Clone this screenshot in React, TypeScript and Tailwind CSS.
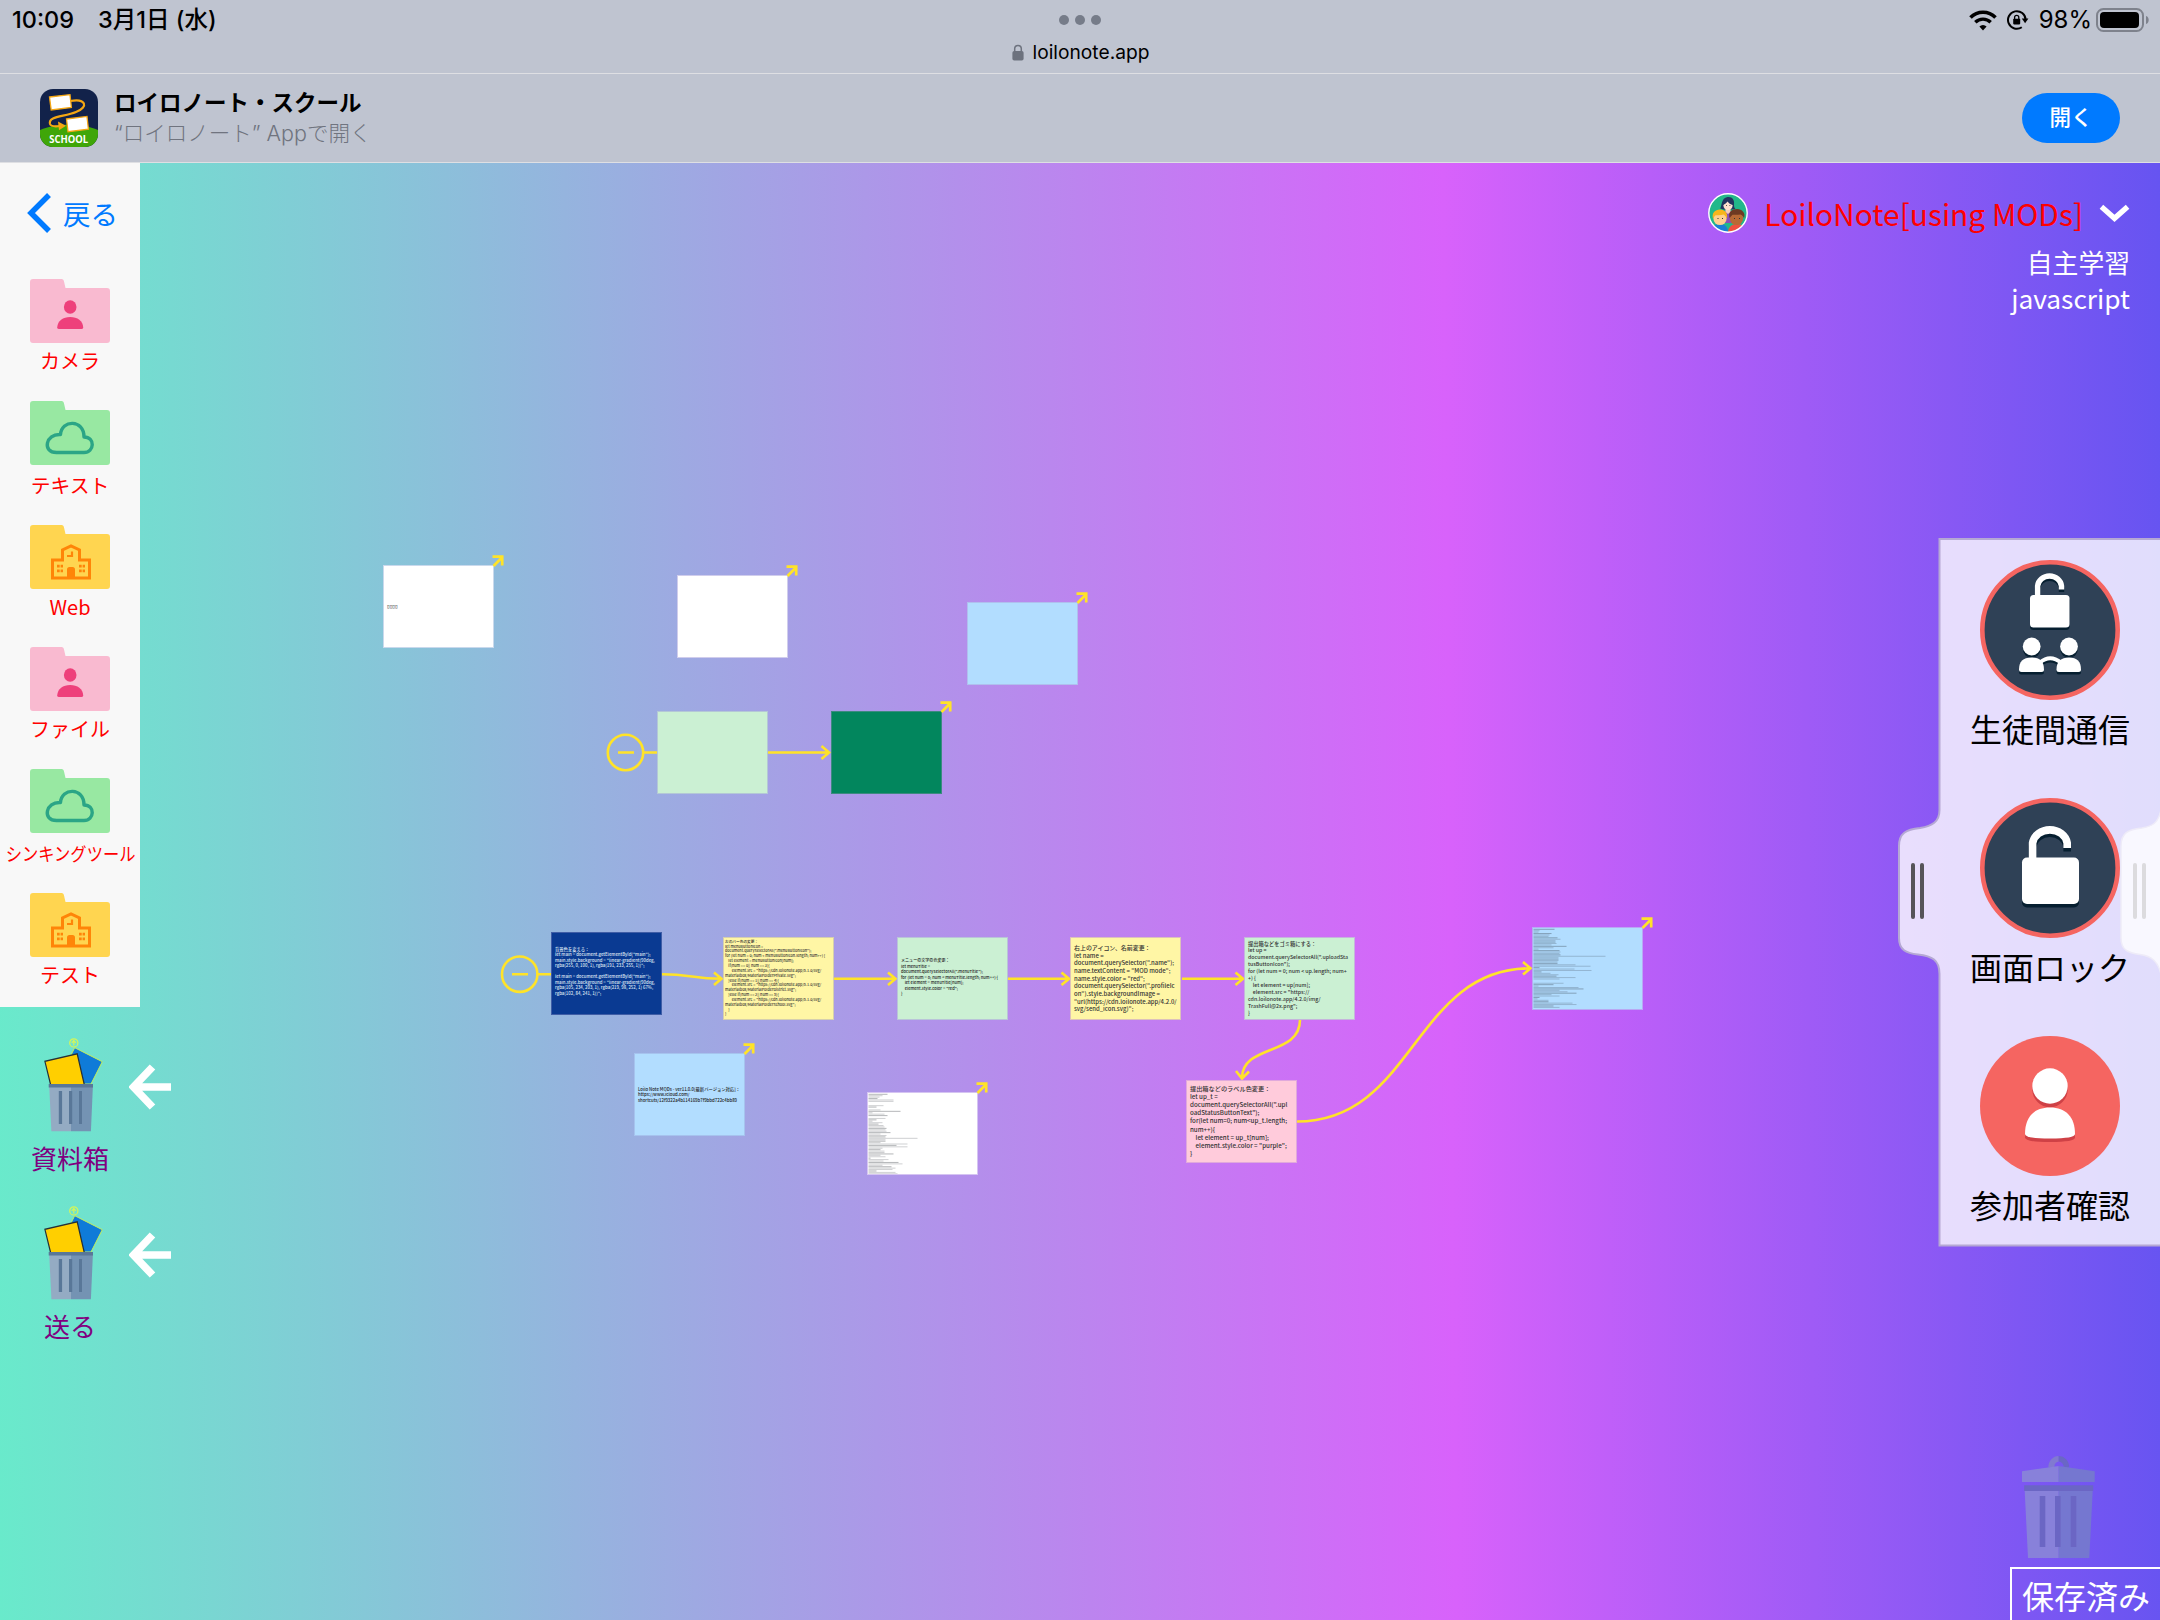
import React from "react";

const JP = "font-['Noto_Sans_CJK_JP',sans-serif]";
const UI = "font-['Inter','Noto_Sans_CJK_JP',sans-serif]";

function StatusBar() {
  return (
    <div className={`flex h-[74px] shrink-0 flex-col border-b border-[#dedfe3] ${UI}`}>
      <div className="grid h-[40px] grid-cols-3 items-center pl-[12px] pr-[10px]">
        <div className="flex items-center text-[23.5px] font-medium leading-[40px] text-black">
          <span className="w-[86px]">10:09</span>
          <span className="whitespace-nowrap text-[23.5px]">3月1日 (水)</span>
        </div>
        <div className="flex items-center justify-center gap-[6px] pr-[2px]">
          <i className="size-[10px] rounded-full bg-[#767c89]" />
          <i className="size-[10px] rounded-full bg-[#767c89]" />
          <i className="size-[10px] rounded-full bg-[#767c89]" />
        </div>
        <div className="flex items-center justify-end">
          <svg width="28" height="21" viewBox="0 0 28 21" fill="none" stroke="#000" className="mr-[10px]">
            <path d="M1.5 7.4a17.6 17.6 0 0 1 25 0" strokeWidth="3.6" />
            <path d="M6.3 12.3a11 11 0 0 1 15.4 0" strokeWidth="3.4" />
            <path d="M14 20.4l-3.6-3.8a5 5 0 0 1 7.2 0z" fill="#000" stroke="none" />
          </svg>
          <svg width="22" height="20" viewBox="0 0 22 20" className="mr-[10px]">
            <path d="M14.8 17.2a8.8 8.8 0 1 1 3.8-7.4" fill="none" stroke="#000" strokeWidth="2" />
            <path d="M14.8 8.6h6.6l-3.3 4.6z" />
            <rect x="6.2" y="8.8" width="7" height="5.6" rx="0.8" />
            <path d="M7.6 9V7.4a2.1 2.1 0 0 1 4.2 0V9" fill="none" stroke="#000" strokeWidth="1.3" />
          </svg>
          <span className="mr-[4px] text-[24px] leading-[40px] text-black">98%</span>
          <svg width="54" height="24" viewBox="0 0 54 24">
            <rect x="1" y="1" width="46" height="22" rx="6.5" fill="none" stroke="#7e828c" strokeWidth="2" />
            <rect x="4" y="4" width="39" height="16" rx="4" />
            <path d="M50 8c3.600 1 3.600 7 0 8z" fill="#7e828c" />
          </svg>
        </div>
      </div>
      <div className="flex h-[24px] items-center justify-center pl-[1px] text-[19.2px] leading-[24px] text-black">
        <svg width="12" height="17" viewBox="0 0 12 17" className="mr-[9px]">
          <rect x="0.400" y="7" width="11.200" height="9.500" rx="1.800" fill="#6d727e" />
          <path d="M2.700 8V4.800a3.300 3.300 0 0 1 6.600 0V8" fill="none" stroke="#6d727e" strokeWidth="1.500" />
        </svg>
        <span>loilonote.app</span>
      </div>
    </div>
  );
}

function AppIcon() {
  return (
    <svg width="58" height="58" viewBox="0 0 58 58">
      <defs>
        <clipPath id="app-icon-shape">
          <rect width="58" height="58" rx="13" />
        </clipPath>
      </defs>
      <g clipPath="url(#app-icon-shape)">
        <rect width="58" height="58" fill="#12224a" />
        <path d="M0 41C16 34 42 34 58 41V58H0z" fill="#3fa608" />
        <path
          d="M30 12C46 9 49 18 36 23C24 28 8 27 10 35C11 38 16 37.500 20 37"
          fill="none"
          stroke="#f5a713"
          strokeWidth="2.200"
        />
        <path d="M18 32.500l8 4.200-7 4.600z" fill="#f5a713" />
        <path d="M9.500 8l20.500-2.400 1.400 12.800L11.200 21z" fill="#fff" stroke="#f5a713" strokeWidth="1.300" />
        <path d="M26.500 30l20.500-2.600 1.400 12.800L28 42.700z" fill="#fff" stroke="#f5a713" strokeWidth="1.300" />
        <text
          x="28.700"
          y="54.300"
          textAnchor="middle"
          fill="#fff"
          fontFamily="Open Sans"
          fontWeight="700"
          fontSize="10.500"
          textLength="39"
          lengthAdjust="spacingAndGlyphs"
        >
          SCHOOL
        </text>
      </g>
    </svg>
  );
}

function AppBanner() {
  return (
    <div className={`flex h-[89px] shrink-0 items-center border-b border-[#dedfe3] pl-[40px] pr-[40px] ${UI}`}>
      <AppIcon />
      <div className="ml-[16px] flex flex-1 flex-col">
        <span className="whitespace-nowrap text-[22.5px] font-bold leading-[30px] text-black">ロイロノート・スクール</span>
        <span className="whitespace-nowrap text-[21.500px] font-light leading-[30px] text-[#70747f]">“ロイロノート” Appで開く</span>
      </div>
      <button className="h-[50px] w-[98px] rounded-[25px] bg-[#007aff] pb-[2px] text-[21.500px] font-medium text-white">開く</button>
    </div>
  );
}

type Kind = "person" | "cloud" | "school";

function FolderIcon({ kind }: { kind: Kind }) {
  const fill = kind === "person" ? "#f9bad0" : kind === "cloud" ? "#98e8a2" : "#ffd550";
  return (
    <svg width="80" height="64" viewBox="0 0 80 64" className="shrink-0">
      <path
        d="M3 0H31.500C33 0 33.800 1 34 2.500L35.500 9H77A3 3 0 0 1 80 12V61A3 3 0 0 1 77 64H3A3 3 0 0 1 0 61V3A3 3 0 0 1 3 0z"
        fill={fill}
      />
      {kind === "person" && (
        <g fill="#ee407b">
          <ellipse cx="40.200" cy="28" rx="6.300" ry="6.800" />
          <path d="M27.200 48.500C27.500 42 33 38 40.200 38S53 42 53.200 48.500Q53 50 51.500 50H29Q27.300 50 27.200 48.500z" />
        </g>
      )}
      {kind === "cloud" && (
        <path
          d="M26.500 51.500C12 51.500 15.500 32.500 30.500 33.500C31.500 18.500 54 18 54 36C65.500 36 64.500 51.500 54 51.500z"
          fill="none"
          stroke="#2ba586"
          strokeWidth="3.400"
          strokeLinejoin="round"
        />
      )}
      {kind === "school" && (
        <g fill="none" stroke="#ff8508" strokeWidth="3">
          <path d="M22.500 35V53H59.500V35H49.500V25L41 21L32.500 25V35z" strokeLinejoin="miter" />
          <path d="M37 54V44.500Q37 42 39.500 42H42.500Q45 42 45 44.500V54z" fill="#ff8508" stroke="none" />
          <path d="M42 26.500V31H37" strokeWidth="2.200" />
          <path d="M27 41.200h6M27 45.900h6M49 41.200h6M49 45.900h6" strokeWidth="2.800" strokeDasharray="2.700 0.900" />
        </g>
      )}
    </svg>
  );
}

const menu: { label: string; kind: Kind; box: string; text: string }[] = [
  { label: "カメラ", kind: "person", box: "h-[122px]", text: "mt-[3px] text-[20px]" },
  { label: "テキスト", kind: "cloud", box: "h-[124px]", text: "mt-[5px] text-[19.800px]" },
  { label: "Web", kind: "school", box: "h-[122px]", text: "mt-[3px] text-[20px]" },
  { label: "ファイル", kind: "person", box: "h-[122px]", text: "mt-[3px] text-[20px]" },
  { label: "シンキングツール", kind: "cloud", box: "h-[124px]", text: "mt-[5px] pl-[2px] text-[18.500px] scale-x-[0.88]" },
  { label: "テスト", kind: "school", box: "h-[110px]", text: "mt-[3px] text-[20px]" },
];

function FullBin() {
  return (
    <svg width="62" height="94" viewBox="0 0 62 94">
      <path d="M30.700 9.700L58.300 23.700 47 46H22L27 17z" fill="#0f7bd8" stroke="#c5ef5a" strokeWidth="1" />
      <circle cx="29.800" cy="4.900" r="4.100" fill="none" stroke="#d3f65a" strokeWidth="1.200" />
      <path d="M29.800 7.500V3M27.700 4.800l2.100-2.300 2.100 2.300" fill="none" stroke="#d3f65a" strokeWidth="1.200" />
      <path d="M6.700 47L0.900 23.300 33.200 15.800 40.400 47z" fill="#ffcf00" stroke="#243038" strokeWidth="1.200" />
      <path d="M5.200 48H27V93.300H7.400z" fill="#94abc3" />
      <path d="M27 48H48.900L46.900 93.300H27z" fill="#7493b3" />
      <path d="M4.700 46H49V49.400H4.700z" fill="#597798" />
      <path d="M14.800 53h3.300v33h-3.300zM25 53h3.200v33H25zM35 53h3v33h-3z" fill="#597798" />
    </svg>
  );
}

function BinButton({ label }: { label: string }) {
  return (
    <div className="flex h-[168px] w-[180px]">
      <div className="flex w-[140px] flex-col items-center">
        <div className="pl-[9px]">
          <FullBin />
        </div>
        <span className="mt-[8px] text-[26px] leading-[36px] text-[#800080]">{label}</span>
      </div>
      <svg width="44" height="46" viewBox="0 0 44 46" className="-ml-[11px] mt-[26px]" fill="none" stroke="#fff" strokeWidth="7.600">
        <path d="M23.500 3L4.500 23 23.500 43M5 23H42" />
      </svg>
    </div>
  );
}

function Sidebar() {
  return (
    <div className={`flex w-[180px] flex-col ${JP}`}>
      <div className="flex h-[844px] w-[140px] flex-col items-center bg-[#f8f8f8]">
        <div className="flex h-[100px] w-full shrink-0 items-center pl-[27px] text-[#007aff]">
          <svg width="25" height="40" viewBox="0 0 25 40" fill="none" stroke="#007aff" strokeWidth="5.500">
            <path d="M22 2L4 20 22 38" />
          </svg>
          <span className="ml-[11px] text-[27.500px] leading-[42px]">戻る</span>
        </div>
        <div className="flex flex-col items-center pt-[16px]">
          {menu.map((m) => (
            <div key={m.label} className={`flex w-[140px] flex-col items-center ${m.box}`}>
              <FolderIcon kind={m.kind} />
              <span className={`whitespace-nowrap leading-[30px] text-[#ff0000] ${m.text}`}>{m.label}</span>
            </div>
          ))}
        </div>
      </div>
      <div className="flex flex-col pt-[31px]">
        <BinButton label="資料箱" />
        <BinButton label="送る" />
      </div>
    </div>
  );
}

function Avatar() {
  return (
    <svg width="40" height="40" viewBox="0 0 40 40">
      <defs>
        <clipPath id="avatar-shape">
          <circle cx="20" cy="20" r="19" />
        </clipPath>
      </defs>
      <g clipPath="url(#avatar-shape)">
        <rect width="40" height="40" fill="#22b88a" />
        <path d="M12 30C11 20 15 17.500 20 17.500S29 20 28 30z" fill="#8a4fb8" />
        <path d="M12.200 15.500C14 13 13 5 19.500 4C26 3.500 26.500 9 26 12c0 2 .5 3 1.500 4l-4 .5h-8z" fill="#22355f" />
        <path d="M17.500 15h5v4l-2.500 2-2.500-2z" fill="#f6cfb9" />
        <circle cx="20" cy="12.500" r="4.600" fill="#ffe0cf" />
        <path d="M15 12c2-1 3.500-2 4.500-3.500 1 1.500 3 3 5.500 3.500C26 7 23 5 20 5s-6 2-5 7z" fill="#22355f" />
        <path d="M3 40C3 33 7 31 12 31s8 3 8 9z" fill="#1a7fd4" />
        <circle cx="12" cy="25.500" r="6.600" fill="#ffd08f" />
        <path d="M5 26C3.500 20 7 16.500 12 16.500s8 3.500 7 9c-1-2-2-3-3.500-4-3 1-7 .5-8.500 1z" fill="#f8b61c" />
        <path d="M20 40c0-6 4-9 9-9s8 3 8 9z" fill="#ee5140" />
        <circle cx="28.500" cy="25.500" r="6.600" fill="#b86a35" />
        <path d="M21.500 25C20 19 24 16 29 16s9 4 7 9c-1-2-2-3-3.500-3.500-3 .5-6 .3-8 .3z" fill="#6e3a22" />
        <path d="M9.500 25.500h1M14 25.500h1M26 25.500h1M31 25.500h1M18 12.500h.8M21.500 12.500h.8" stroke="#333" strokeWidth="1" />
      </g>
      <circle cx="20" cy="20" r="19.200" fill="none" stroke="#fff" strokeWidth="1.400" />
    </svg>
  );
}

function Account() {
  return (
    <div className={`flex flex-col items-end pr-[30px] pt-[28px] ${JP}`}>
      <div className="flex h-[44px] items-center">
        <Avatar />
        <span className="ml-[16px] mr-[16px] whitespace-nowrap text-[29.900px] leading-[44px] text-[#ff0000]">LoiloNote[using MODs]</span>
        <svg width="31" height="20" viewBox="0 0 32 20" fill="none" stroke="#fff" strokeWidth="5.500">
          <path d="M2.500 3.500L16 15.500 29.500 3.500" />
        </svg>
      </div>
      <span className="mt-[9px] text-[25.800px] leading-[36px] text-white">自主学習</span>
      <span className="text-[26.300px] leading-[36px] text-white">javascript</span>
    </div>
  );
}

function UnlockChat() {
  const shape = (
    <>
      <rect x="50" y="36.500" width="39.500" height="32.500" rx="3.500" stroke="none" />
      <path d="M57.600 40V27.500A12 11 0 0 1 81.500 27.500V31" fill="none" strokeWidth="5.400" />
      <g stroke="none">
        <circle cx="51.700" cy="88" r="8.900" />
        <path d="M39 111C39 103 43 99 51.500 99S64 103 64 111Q64 113.500 61.500 113.500H41.500Q39 113.500 39 111z" />
        <circle cx="89" cy="88" r="8.900" />
        <path d="M76.500 111C76.500 103 81 99 89 99S101 103 101 111Q101 113.500 98.500 113.500H79Q76.500 113.500 76.500 111z" />
      </g>
      <path d="M60 104Q70 95.500 81 104" fill="none" strokeWidth="3.800" />
    </>
  );
  return (
    <svg width="140" height="140" viewBox="0 0 140 140">
      <circle cx="70" cy="70" r="67.700" fill="#2f4156" stroke="#f56561" strokeWidth="4.600" />
      <g transform="translate(0 -1.500)">
        <g fill="#061f30" stroke="#061f30" transform="translate(0 2.400)">{shape}</g>
        <g fill="#fff" stroke="#fff">{shape}</g>
      </g>
    </svg>
  );
}

function UnlockScreen() {
  const shape = (
    <>
      <rect x="42" y="61" width="57" height="46.500" rx="5" stroke="none" />
      <path d="M52.600 65V46.500A17.500 15.500 0 0 1 87.200 46.500V51.500" fill="none" strokeWidth="7.600" />
    </>
  );
  return (
    <svg width="140" height="140" viewBox="0 0 140 140">
      <circle cx="70" cy="70" r="67.700" fill="#2f4156" stroke="#f56561" strokeWidth="4.600" />
      <g transform="translate(0 -1.500)">
        <g fill="#061f30" stroke="#061f30" transform="translate(0 3.400)">{shape}</g>
        <g fill="#fff" stroke="#fff">{shape}</g>
      </g>
    </svg>
  );
}

function Participants() {
  const shape = (
    <>
      <circle cx="70" cy="50" r="17.700" />
      <path d="M45 98C45 81 54 71.500 70 71.500S95 81 95 98Q95 102.500 70 102.500T45 98z" />
    </>
  );
  return (
    <svg width="140" height="140" viewBox="0 0 140 140">
      <circle cx="70" cy="70" r="70" fill="#f56561" />
      <g fill="#cf4146" transform="translate(0 3.600)">{shape}</g>
      <g fill="#fff">{shape}</g>
    </svg>
  );
}

function Drawer() {
  const items = [
    { label: "生徒間通信", icon: <UnlockChat /> },
    { label: "画面ロック", icon: <UnlockScreen /> },
    { label: "参加者確認", icon: <Participants /> },
  ];
  return (
    <div className={`absolute right-0 top-[375px] flex h-[709px] w-[262px] flex-col ${JP}`}>
      <svg width="262" height="709" viewBox="0 0 262 709" className="absolute inset-0">
        <path
          d="M263 1H41.500V272C41.500 284 34 288 22 290C8 291.500 1 295 1 308V400C1 412 8 415 20 416.500C34 418 41.500 422 41.500 436V707.500H263"
          fill="rgba(255,255,255,0.8)"
          stroke="#b5a8d4"
          strokeWidth="2"
        />
        <path
          d="M263 272C260 286 254 288 244 290C230 291.500 223 295 223 308V400C223 412 230 415 242 416.500C254 418 260 424 263 436z"
          fill="rgba(255,255,255,0.8)"
          stroke="#eeebf8"
          strokeWidth="1.500"
        />
        <path d="M15 327v52M24 327v52" stroke="#565459" strokeWidth="4" strokeLinecap="round" />
        <path d="M237 327v52M246 327v52" stroke="#dcdbde" strokeWidth="4" strokeLinecap="round" />
      </svg>
      <div className="relative flex flex-col pl-[42px] pt-[22px]">
        {items.map((it) => (
          <div key={it.label} className="flex h-[238px] w-[220px] flex-col items-center">
            {it.icon}
            <span className="mt-[5px] whitespace-nowrap text-[32px] leading-[46px] text-black">{it.label}</span>
          </div>
        ))}
      </div>
    </div>
  );
}

function SavedArea() {
  return (
    <div className={`flex flex-col items-end ${JP}`}>
      <svg width="73" height="102" viewBox="0 0 73 102" className="mr-[65px]">
        <path d="M26.300 11.500A10.300 11.500 0 0 1 36.700 0V5.500A5 5 0 0 0 32.500 11.500z" fill="#817ad0" />
        <path d="M36.700 0A10.300 11.500 0 0 1 47.200 11.500H41.500A5 5 0 0 0 36.700 5.500z" fill="#6a67c5" />
        <path d="M0 15.300L36.700 10V26H0z" fill="#8881da" />
        <path d="M36.700 10L72.700 15.300V26H36.700z" fill="#7577d0" />
        <path d="M2.700 35H36.700V102H6z" fill="#8881da" />
        <path d="M36.700 35H70.700L67.300 102H36.700z" fill="#7577d0" />
        <path d="M2.200 29.300H71.200V35H2.200z" fill="#6b66c4" />
        <path d="M17.700 40h5.600v51h-5.600zM33 40h5.600v51H33zM48.700 40h5.600v51h-5.600z" fill="#6b66c4" />
      </svg>
      <div className="mt-[9px] flex h-[53px] w-[150px] justify-center border-l-2 border-t-2 border-white">
        <span className="whitespace-nowrap text-[32px] leading-[53px] text-white">保存済み</span>
      </div>
    </div>
  );
}

interface NoteData {
  x: number;
  y: number;
  look: string;
  body?: string;
  type?: string;
  link?: boolean;
  rows?: number[];
}

const script1 = `背景色を変える：
let main = document.getElementById("main");
main.style.background = "linear-gradient(90deg,
rgba(255, 0, 100, 1), rgba(191, 233, 255, 1))";

let main = document.getElementById("main");
main.style.background = "linear-gradient(90deg,
rgba(105, 234, 203, 1), rgba(219, 98, 252, 1) 67%,
rgba(102, 84, 241, 1))";`;

const script2 = `左のバー色の変更：
let menuButtonIcon =
document.querySelectorAll(".menuButtonIcon");
for (let num = 0; num < menuButtonIcon.length; num++) {
    let element = menuButtonIcon[num];
    if(num == 0|| num == 3){
        element.src = "https://cdn.loilonote.app/5.1.0/svg/
materialbox/MaterialFolderPrivate.svg";
    }else if(num == 1|| num == 4){
        element.src = "https://cdn.loilonote.app/5.1.0/svg/
materialbox/MaterialFolderDistrict.svg";
    }else if(num == 2|| num == 5){
        element.src = "https://cdn.loilonote.app/5.1.0/svg/
materialbox/MaterialFolderSchool.svg";
    }
}`;

const script3 = `メニューの文字の色変更：
let menuTitle =
document.querySelectorAll(".menuTitle");
for (let num = 0; num < menuTitle.length; num++) {
    let element = menuTitle[num];
    element.style.color = "red";
}`;

const script4 = `右上のアイコン、名前変更：
let name =
document.querySelector(".name");
name.textContent = "MOD mode";
name.style.color = "red";
document.querySelector(".profileIc
on").style.backgroundImage =
"url(https://cdn.loilonote.app/4.2.0/
svg/send_icon.svg)";`;

const script5 = `提出箱などをゴミ箱にする：
let up =
document.querySelectorAll(".uploadSta
tusButtonIcon");
for (let num = 0; num < up.length; num+
+) {
    let element = up[num];
    element.src = "https://
cdn.loilonote.app/4.2.0/img/
TrashFull@2x.png";
}`;

const script6 = `提出箱などのラベル色変更：
let up_t =
document.querySelectorAll(".upl
oadStatusButtonText");
for(let num=0; num<up_t.length;
num++){
    let element = up_t[num];
    element.style.color = "purple";
}`;

const script7 = `Loilo Note MODs - ver11.0.0[最新バージョン対応]：
https://www.icloud.com/
shortcuts/12f9322a4b114169b7f9bbd722c4bb89`;

const rowsWhite = [
  19, 14, 11, 9, 25, 25, 0, 0, 15, 8, 0, 12, 32, 4, 16, 19, 0, 17, 8, 4, 14, 10, 15, 16, 18, 17, 18, 22, 12, 18, 17, 49, 17, 17, 12, 39, 28, 39, 14, 12,
  16, 16, 25, 12, 17, 2, 20, 15, 30, 34, 14, 23, 27, 24, 8, 27, 29,
];
const rowsBlue = [
  21, 6, 5, 18, 16, 15, 24, 27, 22, 22, 23, 18, 33, 20, 5, 26, 27, 26, 27, 72, 25, 25, 25, 24, 24, 42, 57, 6, 41, 58, 8, 17, 25, 23, 42, 26, 0, 0, 30,
  20, 5, 45, 50, 26, 34, 43, 18, 26, 6, 4, 15, 15, 39, 43, 20, 26,
];

const CODE = "font-['Noto_Sans_CJK_JP',sans-serif] font-medium";

const notes: NoteData[] = [
  { x: 383, y: 565, look: "bg-white border-[#c9d9ec]", body: "▯▯▯▯", type: "font-['DejaVu_Sans',sans-serif] font-bold text-black pl-[3px] text-[4.800px] leading-[6px]", link: true },
  { x: 677, y: 575, look: "bg-white border-[#d0cdec]", link: true },
  { x: 967, y: 602, look: "bg-[#b2ddff] border-[#b0bfee]", link: true },
  { x: 657, y: 711, look: "bg-[#cbf0d3] border-[#b4c8d6]" },
  { x: 831, y: 711, look: "bg-[#02865d] border-[#3d8a80]", link: true },
  { x: 551, y: 932, look: "bg-[#0a3a92] border-[#3f5da6]", body: script1, type: `${CODE} text-[#dfe6f3] pl-[3px] pb-[4px] text-[4.300px] leading-[5.550px]` },
  { x: 723, y: 937, look: "bg-[#fff6a5] border-[#d5cfae]", body: script2, type: `${CODE} text-[#333] pl-[1px] text-[3.700px] leading-[4.850px]` },
  { x: 897, y: 937, look: "bg-[#cbf0d3] border-[#b9c4d8]", body: script3, type: `${CODE} text-[#222] pl-[3px] pb-[2px] text-[4.050px] leading-[5.600px]` },
  { x: 1070, y: 937, look: "bg-[#fff6a5] border-[#dcc1bb]", body: script4, type: `${CODE} text-[#333] pl-[3px] text-[5.950px] leading-[7.650px]` },
  { x: 1244, y: 937, look: "bg-[#cbf0d3] border-[#c5b5dc]", body: script5, type: `${CODE} text-[#333] pl-[3px] text-[5.250px] leading-[6.900px]` },
  { x: 1186, y: 1080, look: "bg-[#ffcbdb] border-[#e0a9dc]", body: script6, type: `${CODE} text-[#333] pl-[3px] text-[6.200px] leading-[8.100px]` },
  { x: 634, y: 1053, look: "bg-[#b2ddff] border-[#a6c3ee]", body: script7, type: `${CODE} text-[#222] pl-[3px] pt-[1px] text-[4.300px] leading-[5.600px]`, link: true },
  { x: 867, y: 1092, look: "bg-white border-[#d5c4f2]", rows: rowsWhite, link: true },
  { x: 1532, y: 927, look: "bg-[#b2ddff] border-[#b9a8f4]", rows: rowsBlue, link: true },
];

function Note({ n }: { n: NoteData }) {
  return (
    <div className={`absolute h-[83px] w-[111px] border ${n.look}`} style={{ left: n.x, top: n.y - 163 }}>
      {n.body && (
        <div className={`flex h-full items-center ${n.type}`}>
          <pre className="[font-family:inherit]">{n.body}</pre>
        </div>
      )}
      {n.rows && (
        <svg width="109" height="81" viewBox="0 0 109 81">
          {n.rows.map((w, i) => (
            <path key={i} d={`M0.500 ${1.3 + i * 1.42}h${w}`} stroke="#30363c" strokeOpacity={i % 3 === 0 ? 0.4 : 0.26} strokeWidth="0.900" />
          ))}
        </svg>
      )}
      {n.link && (
        <svg width="14" height="14" viewBox="0 0 14 14" className="absolute -top-[13px] left-[108px]" fill="none" stroke="#ffe328" strokeWidth="2.700">
          <path d="M1.500 13L10 4.500M0.500 3.700H10.200V12.500" />
        </svg>
      )}
    </div>
  );
}

function Links() {
  return (
    <svg width="2160" height="1457" viewBox="0 163 2160 1457" className="absolute inset-0" fill="none" stroke="#ffe328" strokeWidth="2.600">
      <circle cx="625.500" cy="752.500" r="17.700" />
      <path d="M618 752.500h16M644 752.500h13M768 752.500h61M821.500 746l7.500 6.500-7.500 6.500" />
      <circle cx="519.700" cy="974.200" r="17.700" />
      <path d="M512 974.200h16M538 974.200h13M662 974.200C690 974.200 694 978.800 721 978.800M714 972.500l7.500 6.300-7.500 6.300" />
      <path d="M834 978.800h61M888 972.500l7.500 6.300-7.500 6.300" />
      <path d="M1008 978.800h60M1061.500 972.500l7.500 6.300-7.500 6.300" />
      <path d="M1182 978.800h60M1235.500 972.500l7.500 6.300-7.500 6.300" />
      <path d="M1300 1020C1300 1056 1242 1044 1242 1078M1236 1071l6 7.500 7-7" />
      <path d="M1297 1121.500C1414 1121.500 1414 968.300 1530 968.300M1523 962l7.500 6.300-7.500 6.300" />
    </svg>
  );
}

export default function App() {
  return (
    <div className="flex h-[1620px] w-[2160px] flex-col overflow-hidden bg-[#bfc4d0]">
      <StatusBar />
      <AppBanner />
      <div className="relative flex h-[1457px] justify-between bg-[linear-gradient(89.5deg,#69eacb_0%,#d862fb_67%,#6654f1_100%)]">
        <Links />
        {notes.map((n, i) => (
          <Note key={i} n={n} />
        ))}
        <Sidebar />
        <div className="flex flex-col justify-between">
          <Account />
          <SavedArea />
        </div>
        <Drawer />
      </div>
    </div>
  );
}
